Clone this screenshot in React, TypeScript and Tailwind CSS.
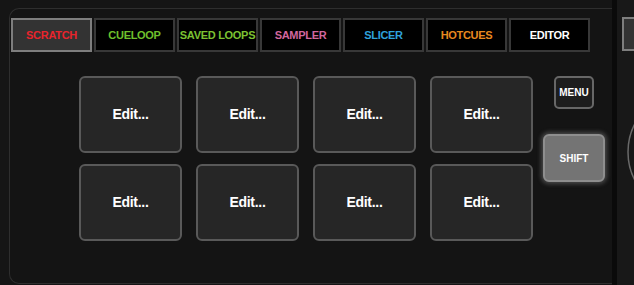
const tabs = [
  { label: 'SCRATCH', color: 'text-[#e8242c]', active: true },
  { label: 'CUELOOP', color: 'text-[#6fc02c]' },
  { label: 'SAVED LOOPS', color: 'text-[#7cc232]' },
  { label: 'SAMPLER', color: 'text-[#d2669e]' },
  { label: 'SLICER', color: 'text-[#2fa2dc]' },
  { label: 'HOTCUES', color: 'text-[#e8891f]' },
  { label: 'EDITOR', color: 'text-white' },
];

const pads = Array.from({ length: 8 }, (_, i) => i);

const App = () => {
  return (
    <div className="w-[634px] h-[285px] bg-[#151515] flex overflow-hidden font-['Liberation_Sans',Arial,sans-serif] font-bold">
      {/* Deck panel */}
      <div className="shrink-0 pl-[9px] pt-[8px] w-[612px] h-full">
        <div className="h-[276px] rounded-l-[10px] border border-r-0 border-[#2e2e2e] bg-[#141414] pt-[9px] pl-[1px]">
          {/* Mode tabs */}
          <div className="flex gap-[2px]">
            {tabs.map((t) => (
              <div
                key={t.label}
                className={`w-[81px] h-[34px] flex items-center justify-center border-2 text-[11px] tracking-[-0.3px] ${t.color} ${
                  t.active ? 'bg-[#333333] border-[#7e7e7e]' : 'bg-black border-[#383838]'
                }`}
              >
                {t.label}
              </div>
            ))}
          </div>

          {/* Pads + side buttons */}
          <div className="flex mt-[24px] ml-[68px]">
            <div className="grid grid-cols-[repeat(4,103px)] grid-rows-[repeat(2,77px)] gap-x-[14px] gap-y-[11px]">
              {pads.map((p) => (
                <div
                  key={p}
                  className="flex items-center justify-center rounded-[6px] border-2 border-[#595959] bg-[#262626] text-white text-[14px] tracking-[-0.3px]"
                >
                  Edit...
                </div>
              ))}
            </div>
            <div className="ml-[10px] w-[62px] flex flex-col items-center">
              <div className="w-[40px] h-[33px] flex items-center justify-center rounded-[5px] border-2 border-[#676767] bg-[#1d1d1d] text-white text-[10px]">
                MENU
              </div>
              <div className="mt-[25px] w-[62px] h-[48px] flex items-center justify-center rounded-[6px] border-2 border-[#8e8e8e] bg-[#747474] text-white text-[10px] shadow-[0_0_4px_2px_rgba(150,150,150,0.4)]">
                SHIFT
              </div>
            </div>
          </div>
        </div>
      </div>

      {/* Divider */}
      <div className="shrink-0 w-[5px] h-full bg-[#0a0a0a]" />

      {/* Next panel (cut off) */}
      <div className="relative flex-1 min-w-0 overflow-hidden h-full bg-[#181818] pt-[17px] pl-[5px]">
        <div className="w-[20px] h-[34px] border-2 border-[#7e7e7e] bg-[#333333]" />
        <svg className="absolute left-0 top-0" width="17" height="285">
          <circle cx="71" cy="152" r="60" fill="none" stroke="#6a6a6a" strokeWidth="1.5" />
        </svg>
      </div>
    </div>
  );
};

export default App;
